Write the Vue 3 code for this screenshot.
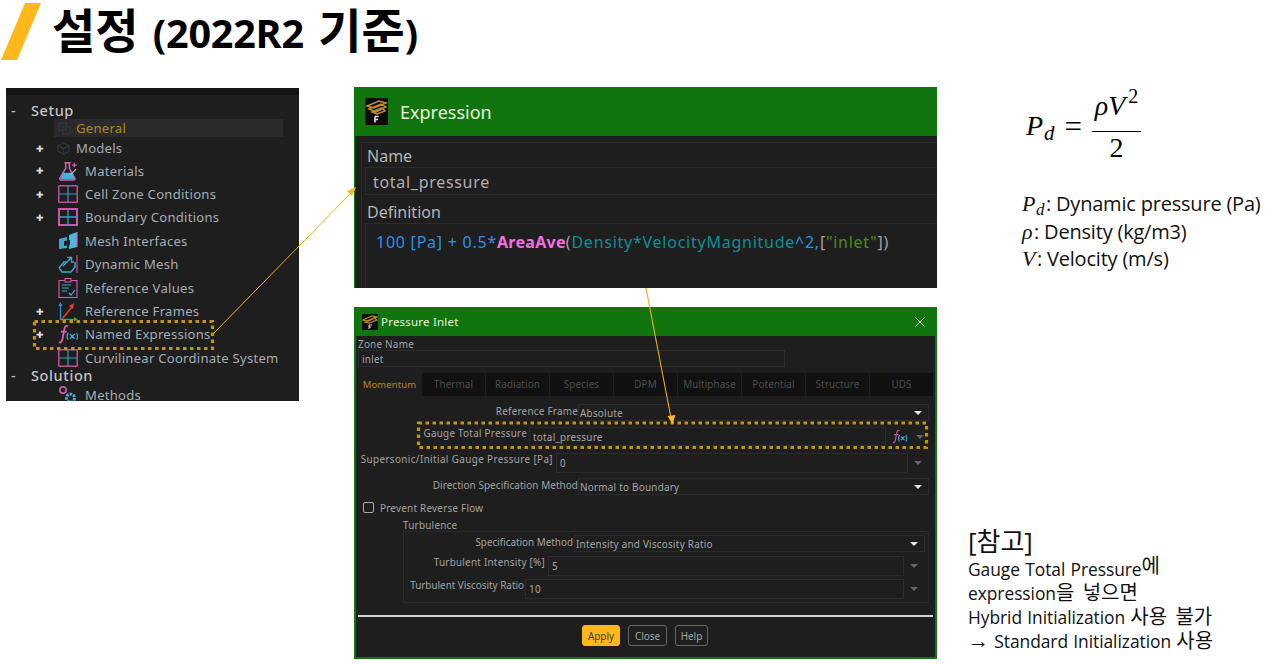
<script setup>
const tabs = ['Thermal','Radiation','Species','DPM','Multiphase','Potential','Structure','UDS']
</script>

<template>
  <div class="slide">
    <header class="title">
      <span class="slash"></span>
      <h1><span class="ko">설정</span> <span class="lat">(2022R2</span> <span class="ko">기준</span><span class="lat">)</span></h1>
    </header>

    <main class="columns">
      <section class="tree">
        <div class="tree-top"></div>
        <div class="node head h1st"><span class="mark">-</span>Setup</div>
        <div class="node general"><svg class="ic small" viewBox="0 0 14 14"><rect x="1" y="1" width="8" height="8" fill="none" stroke="#34343c" stroke-width="1.4"/><rect x="5" y="5" width="8" height="8" fill="none" stroke="#34343c" stroke-width="1.4"/></svg><span class="gold">General</span></div>
        <div class="node models"><span class="plus">✚</span><svg class="ic small" viewBox="0 0 14 14"><path d="M7 1l6 3v6l-6 3-6-3V4zM1 4l6 3 6-3M7 7v6" fill="none" stroke="#34343c" stroke-width="1.3"/></svg><span>Models</span></div>
        <div class="node"><span class="plus">✚</span><svg class="ic" viewBox="0 0 22 22"><path d="M7 2h7M8.500 2v6L2 19q0 2 2 2h13q2 0 1.500-2L12.500 8V2" fill="none" stroke="#d65fb0" stroke-width="1.7"/><path d="M5.500 13h10l3 7H3z" fill="#3fb4dc"/><path d="M18 2v5M15.500 4.500h5" stroke="#d65fb0" stroke-width="1.3"/><path d="M14 15l6-6" stroke="#c0c0c0" stroke-width="1.2"/></svg><span>Materials</span></div>
        <div class="node"><span class="plus">✚</span><svg class="ic" viewBox="0 0 20 18"><rect x=".8" y=".8" width="18.400" height="16.400" fill="none" stroke="#e05cb8" stroke-width="1.2"/><path d="M10 1v16M1 9h18" stroke="#3a9cc0" stroke-width="1.2"/></svg><span>Cell Zone Conditions</span></div>
        <div class="node"><span class="plus">✚</span><svg class="ic" viewBox="0 0 20 18"><rect x="1" y="1" width="18" height="16" fill="none" stroke="#e05cb8" stroke-width="1.800"/><path d="M10 1v16M1 9h18" stroke="#3a9cc0" stroke-width="1.3"/></svg><span>Boundary Conditions</span></div>
        <div class="node"><svg class="ic" viewBox="0 0 20 20"><path d="M1 8l8-2v11l-8 1z" fill="#3fa8d0"/><path d="M11 4l8-3v15l-8 2z" fill="#4ab8e0"/><path d="M6 10l6-1v5l-6 1z" fill="#222"/><path d="M19 1v15" stroke="#d65fb0" stroke-width="1.200"/></svg><span>Mesh Interfaces</span></div>
        <div class="node"><svg class="ic" viewBox="0 0 20 20"><path d="M19 1v18" stroke="#d65fb0" stroke-width="1"/><path d="M1 14l5-6h2M13 8h3M1 14l3 4h9l4-5V8" fill="none" stroke="#3fa8d0" stroke-width="1.400"/><path d="M5 12L13 4M9.500 3.500h4v4" fill="none" stroke="#3fa8d0" stroke-width="1.400"/></svg><span>Dynamic Mesh</span></div>
        <div class="node"><svg class="ic" viewBox="0 0 20 20"><rect x="1" y="2.500" width="18" height="17" fill="none" stroke="#d65fb0" stroke-width="1.100"/><rect x="7" y=".5" width="6" height="3.500" fill="#1e1e1e" stroke="#d65fb0"/><path d="M4 7h9M4 10h7M4 13h5" stroke="#3fa8d0" stroke-width="1.100"/><path d="M11 15l2 2 4-5" fill="none" stroke="#3fa8d0" stroke-width="1.200"/></svg><span>Reference Values</span></div>
        <div class="node"><span class="plus">✚</span><svg class="ic" viewBox="0 0 20 20"><path d="M2.500 19V3" stroke="#2f8fd8" stroke-width="1.300"/><path d="M.5 5l2-4 2 4z" fill="#2f8fd8"/><path d="M4 18L14 6" stroke="#e03c3c" stroke-width="1.600"/><path d="M11 5l5-3-1 6z" fill="#e03c3c"/><path d="M3 18.500h14" stroke="#27b04a" stroke-width="1.300"/><path d="M16 16l4 2.500-4 1.500z" fill="#27b04a"/></svg><span>Reference Frames</span></div>
        <div class="node"><span class="plus">✚</span><svg class="ic" viewBox="0 0 21 20"><path d="M10.500 2Q8 .5 7 3.500L4.500 16Q3.800 19.500 1 18.500M3 7.500H9" fill="none" stroke="#d65fb0" stroke-width="1.900"/><path d="M10.500 9q-2 4 0 7M19.500 9q2 4 0 7M12.500 10l5 5M17.500 10l-5 5" fill="none" stroke="#3fa8d0" stroke-width="1.400"/></svg><span>Named Expressions</span></div>
        <div class="node"><svg class="ic" viewBox="0 0 20 18"><rect x=".8" y=".8" width="18.400" height="16.400" fill="none" stroke="#e05cb8" stroke-width="1.200"/><path d="M10 1v16M1 9h18" stroke="#3a9cc0" stroke-width="1.200"/></svg><span>Curvilinear Coordinate System</span></div>
        <div class="node head hsol"><span class="mark">-</span>Solution</div>
        <div class="node meth"><svg class="ic" viewBox="0 0 20 20"><circle cx="5" cy="5" r="3.200" fill="none" stroke="#d65fb0" stroke-width="1.500"/><circle cx="12.500" cy="13" r="4" fill="none" stroke="#3fa8d0" stroke-width="3" stroke-dasharray="2.500 1"/></svg><span>Methods</span></div>
      </section>

      <section class="mid">
        <div class="expr">
          <div class="expr-bar">
            <svg class="fluent" viewBox="0 0 23 27"><rect width="23" height="27" fill="#0b0b0b"/><path d="M2 8L14 3l7 2-12 5zM4 11l12-5 5 3-10 5zM7 14l10-4 3 3-8 3z" fill="none" stroke="#c08a24" stroke-width="1.500"/><path d="M10 18.500h3.500M10 18.500v6M10 21.500h3" stroke="#e8e8e8" stroke-width="1.500"/></svg>
            <span>Expression</span>
          </div>
          <div class="expr-body">
            <div class="expr-label first">Name</div>
            <div class="expr-field name">total_pressure</div>
            <div class="expr-label">Definition</div>
            <div class="expr-field def"><span class="c-num">100 [Pa] + 0.5</span><span class="c-op">*</span><b class="c-fn">AreaAve</b><span class="c-par">(</span><span class="c-var">Density*VelocityMagnitude</span><span class="c-num">^2,</span><span class="c-par">[</span><span class="c-str">"inlet"</span><span class="c-par">])</span></div>
          </div>
        </div>

        <div class="inlet">
          <div class="inlet-bar">
            <svg class="fluent-s" viewBox="0 0 16 16"><rect width="16" height="16" fill="#0b0b0b"/><path d="M1 6l9-4 5 1-9 4zM3 8l9-4 3 2-8 3z" fill="none" stroke="#c08a24" stroke-width="1.200"/><path d="M7 11v4M7 11h3M7 13h2" stroke="#ddd"/></svg>
            <span class="inlet-title">Pressure Inlet</span>
            <svg class="close" viewBox="0 0 10 10"><path d="M.5.5l9 9M9.500.5l-9 9" stroke="#f0f0f0" stroke-width="1"/></svg>
          </div>
          <div class="inlet-body">
            <div class="zone-label">Zone Name</div>
            <div class="box zone">inlet</div>
            <div class="tabs">
              <div class="tab active">Momentum</div>
              <div v-for="t in tabs" :key="t" class="tab">{{ t }}</div>
            </div>

            <div class="row r1">
              <label class="lab w-222">Reference Frame</label>
              <div class="box sel w-351"><span>Absolute</span><i class="tri"></i></div>
            </div>
            <div class="row r2">
              <label class="lab w-171 up">Gauge Total Pressure</label>
              <div class="box inp w-357 gap2">total_pressure</div>
              <svg class="fx" viewBox="0 0 21 20"><path d="M10.500 2Q8 .5 7 3.500L4.500 16Q3.800 19.500 1 18.500M3 7.500H9" fill="none" stroke="#c050a0" stroke-width="1.700"/><path d="M10.500 8q-2.500 4.500 0 9M19.500 8q2.500 4.500 0 9M12.500 10l5 5M17.500 10l-5 5" fill="none" stroke="#3fa8d0" stroke-width="1.700"/></svg>
              <i class="tri dim after-fx"></i>
            </div>
            <div class="row r3">
              <label class="lab w-197 up wide">Supersonic/Initial Gauge Pressure [Pa]</label>
              <div class="box inp w-352 gap3">0</div>
              <i class="tri dim after"></i>
            </div>
            <div class="row r4">
              <label class="lab w-222 mid-sp">Direction Specification Method</label>
              <div class="box sel w-351"><span>Normal to Boundary</span><i class="tri"></i></div>
            </div>
            <div class="check"><span class="cb"></span><span>Prevent Reverse Flow</span></div>
            <div class="turb-label">Turbulence</div>
            <div class="group">
              <div class="row g1">
                <label class="lab w-169 tight">Specification Method</label>
                <div class="box sel w-351 gap1"><span>Intensity and Viscosity Ratio</span><i class="tri"></i></div>
              </div>
              <div class="row g2">
                <label class="lab w-141 up">Turbulent Intensity [%]</label>
                <div class="box inp w-356 gap3">5</div>
                <i class="tri dim after"></i>
              </div>
              <div class="row g3">
                <label class="lab w-120 up tight">Turbulent Viscosity Ratio</label>
                <div class="box inp w-379 gap1">10</div>
                <i class="tri dim after"></i>
              </div>
            </div>
            <div class="sep"></div>
            <div class="btns">
              <button class="btn apply">Apply</button>
              <button class="btn close-b">Close</button>
              <button class="btn help">Help</button>
            </div>
          </div>
        </div>
      </section>

      <section class="right">
        <div class="formula">
          <span class="m pd">P<sub>d</sub></span>
          <span class="eq">=</span>
          <span class="frac">
            <span class="num m">ρV<sup>2</sup></span>
            <span class="den">2</span>
          </span>
        </div>
        <div class="legend">
          <div><span class="mi">P<sub>d</sub></span>: Dynamic pressure (Pa)</div>
          <div><span class="mi">ρ</span>: Density (kg/m3)</div>
          <div><span class="mi">V</span>: Velocity (m/s)</div>
        </div>
        <div class="note">
          <div class="note-h">[참고]</div>
          <div class="note-l">Gauge Total Pressure<span class="kr raise">에</span></div>
          <div class="note-l">expression<span class="kr">을 넣으면</span></div>
          <div class="note-l">Hybrid Initialization <span class="kr">사용 불가</span></div>
          <div class="note-l"><span class="arrow">→</span> Standard Initialization <span class="kr">사용</span></div>
        </div>
      </section>
    </main>

    <svg class="overlay" viewBox="0 0 1278 664">
      <rect x="34.500" y="321.500" width="178" height="27" fill="none" stroke="#c8920f" stroke-width="3.200" stroke-dasharray="3.500 3.500"/>
      <rect x="418.500" y="423" width="508" height="24.500" fill="none" stroke="#c8920f" stroke-width="3.200" stroke-dasharray="3.500 3.500"/>
      <path d="M213 334L351 193" stroke="#f0ae1e" stroke-width="1"/>
      <path d="M356 187l-9 4 5 5z" fill="#ffb81c"/>
      <path d="M646 288L671 418" stroke="#f0ae1e" stroke-width="1.100"/>
      <path d="M672.500 424l-5-8 8-1z" fill="#ffb81c"/>
    </svg>
  </div>
</template>

<style>
html, body { margin: 0; padding: 0; background: #fff; }
</style>

<style scoped>
.slide { position: relative; width: 1278px; height: 664px; overflow: hidden; background: #fff; font-family: "Open Sans", "Noto Sans CJK KR", sans-serif; color: #000; }
.title { height: 87px; display: flex; align-items: flex-start; position: relative; }
.slash { width: 40px; height: 57px; margin-top: 3px; background: #ffb81c; clip-path: polygon(24px 0, 40px 0, 16px 100%, 0 100%); flex: none; margin-left: 1px; }
h1 { margin: 0 0 0 11px; font-size: 36px; line-height: 56px; font-weight: 700; white-space: nowrap; word-spacing: 5px; }
.ko { font-family: "Noto Sans CJK KR", sans-serif; font-size: 47px; }
.lat { font-family: "Open Sans", sans-serif; font-size: 39.500px; letter-spacing: -.2px; }

.columns { display: flex; align-items: flex-start; }

/* Tree */
.tree { width: 293px; height: 313px; margin: 1px 0 0 6px; background: #1e1e1e; color: #a4acb4; font-family: "Noto Sans", sans-serif; font-size: 13.100px; flex: none; overflow: hidden; }
.tree-top { height: 7px; background: #141414; }
.node { position: relative; height: 23.400px; display: flex; align-items: center; padding-left: 52px; white-space: nowrap; letter-spacing: .25px; }
.node .ic { width: 20px; height: 20px; flex: none; margin-right: 7px; }
.head { padding-left: 25px; color: #c4c4c4; font-size: 14.500px; font-weight: 500; letter-spacing: .6px; height: 18px; }
.mark { position: absolute; left: 5px; color: #bbb; }
.h1st { height: 18px; margin-top: 6px; }
.hsol { height: 19px; margin-top: -4px; }
.general { height: 18px; margin-left: 48px; padding-left: 4px; margin-right: 16px; background: #2a2a2a; }
.node.general .ic.small, .node.models .ic.small { width: 13px; height: 13px; margin-right: 6px; }
.node.general .ic.small { margin-right: 5px; }
.node.models .ic.small { margin-left: -1px; }
.models { height: 20px; margin-top: 1px; margin-bottom: 1px; }
.gold { color: #b2881c; }
.plus { position: absolute; left: 30px; font-size: 8.500px; color: #ddd; }
.meth { height: 20px; margin-top: 0; }

/* Middle */
.mid { width: 583px; margin-left: 55px; flex: none; display: flex; flex-direction: column; gap: 19px; }
.expr { height: 201px; background: #1e1e1e; border-left: 1px solid #11750f; overflow: hidden; box-sizing: border-box; }
.expr-bar { height: 49px; background: #11750f; display: flex; align-items: center; padding-left: 10px; color: #e6f5dc; font-family: "Noto Sans", sans-serif; font-size: 18px; gap: 12px; }
.fluent { width: 23px; height: 27px; flex: none; }
.expr-body { margin: 6px 0 0 6px; border-top: 1px solid #2c2c2c; border-left: 1px solid #2c2c2c; padding: 0 0 0 3px; font-family: "Noto Sans", sans-serif; height: 200px; }
.expr-label { color: #b4b4b4; font-size: 16px; line-height: 22px; padding-left: 2px; margin-top: 6px; }
.expr-label.first { margin-top: 2px; }
.expr-field { border: 1px solid #2c2c2c; border-right: 0; box-sizing: border-box; padding-left: 7px; color: #b0b0b0; font-size: 16px; white-space: nowrap; }
.name { height: 28px; line-height: 28px; letter-spacing: .7px; }
.def { height: 80px; line-height: 36px; padding-left: 10px; letter-spacing: .75px; }
.c-num { color: #2f8fe8; } .c-op { color: #2f8fe8; }
.c-fn { color: #f070e0; letter-spacing: .3px; } .c-par { color: #a0a0a0; }
.c-var { color: #0f8f96; } .c-str { color: #4c8c18; }

.inlet { height: 352px; box-sizing: border-box; background: #1e1e1e; border: 0 solid #11750f; border-width: 0 2px 2px 2px; }
.inlet-bar { height: 29px; margin-right: -2px; margin-left: -2px; background: #11750f; display: flex; align-items: center; padding: 0 12px 0 8px; color: #e6f5dc; font-family: "Noto Sans", sans-serif; font-size: 11.500px; letter-spacing: .2px; }
.fluent-s { width: 16px; height: 16px; flex: none; margin-right: 3px; }
.inlet-title { flex: 1; }
.close { width: 10px; height: 10px; }
.inlet-body { font-family: "Noto Sans", sans-serif; color: #a4a4a4; font-size: 9.900px; letter-spacing: .25px; }
.zone-label { margin: 2px 0 0 2px; line-height: 12px; }
.box { box-sizing: border-box; border: 1px solid #2c2c2c; color: #a8a8a8; flex: none; white-space: nowrap; }
.zone { width: 427px; height: 17px; margin-left: 2px; line-height: 16px; padding-left: 3px; }
.tabs { display: flex; gap: 1px; margin: 6px 0 0 2px; }
.tab { width: 63px; height: 23px; line-height: 23px; text-align: center; background: #111; color: #4c4c4c; letter-spacing: .1px; }
.tab.active { background: none; color: #b2881c; font-size: 9.500px; }

.row { display: flex; align-items: flex-start; }
.lab { flex: none; text-align: right; line-height: 14px; white-space: nowrap; color: #a4a4a4; }
.up { margin-top: -1px; }
.tight { letter-spacing: 0; }
.wide { letter-spacing: .38px; }
.mid-sp { letter-spacing: .1px; }
.w-222 { width: 222px; } .w-171 { width: 171px; } .w-197 { width: 197px; } .w-169 { width: 169px; } .w-141 { width: 141px; } .w-120 { width: 120px; }
.w-351 { width: 351px; } .w-357 { width: 357px; } .w-352 { width: 352px; } .w-356 { width: 356px; } .w-379 { width: 379px; }
.gap1 { margin-left: 1px; } .gap2 { margin-left: 2px; } .gap3 { margin-left: 3px; }
.r1 { margin-top: 8px; } .r2 { margin-top: 6px; } .r3 { margin-top: 7px; } .r4 { margin-top: 5px; }
.sel { height: 17px; display: flex; align-items: center; justify-content: space-between; padding: 1px 6px 0 1px; }
.r2 .inp { height: 19px; line-height: 19px; padding-left: 3px; }
.inp { height: 20px; line-height: 19px; padding-left: 3px; }
.tri { width: 0; height: 0; border: 4px solid transparent; border-top: 4px solid #e8e8e8; border-bottom: 0; flex: none; }
.tri.dim { border-top-color: #666; }
.after { margin: 8px 0 0 6px; }
.after-fx { margin: 8px 0 0 9px; }
.fx { width: 15px; height: 15px; margin: 2px 0 0 6px; flex: none; }
.check { display: flex; align-items: center; gap: 6px; margin: 7px 0 0 7px; height: 11px; }
.cb { width: 9px; height: 9px; border: 1px solid #a8a8a8; border-radius: 2px; flex: none; }
.turb-label { margin: 6px 0 0 47px; line-height: 12px; }
.group { box-sizing: border-box; width: 526px; height: 72px; margin-left: 47px; border: 1px solid #2a2a2a; padding-top: 3px; }
.g2 { margin-top: 4px; } .g3 { margin-top: 3px; }
.sep { height: 2px; background: #cfcfcf; margin: 12px 2px 0 2px; }
.btns { display: flex; gap: 8px; margin: 8px 0 0 226px; }
.btn { box-sizing: border-box; height: 21px; padding: 0; border-radius: 3px; border: 1px solid #666; background: #1e1e1e; color: #a8a8a8; font: inherit; }
.apply { width: 38px; background: #ffb81c; border-color: #ffb81c; color: #3a3a2a; }
.close-b { width: 39px; } .help { width: 33px; }

/* Right */
.right { margin-left: 0; flex: 1; min-width: 0; }
.formula { display: flex; align-items: center; margin: -3px 0 0 89px; font-family: "Liberation Serif", serif; font-size: 28px; height: 84px; }
.m { font-style: italic; }
.pd { letter-spacing: 1px; }
.m sub { font-size: 21px; line-height: 0; vertical-align: -5px; }
.m sup { font-style: normal; font-size: 20px; line-height: 0; vertical-align: 12px; margin-left: 3px; }
.eq { margin: 0 10px 0 9px; font-size: 31px; line-height: 1; }
.frac { display: inline-flex; flex-direction: column; align-items: center; width: 49px; }
.num { border-bottom: 1.500px solid #000; width: 100%; text-align: center; line-height: 36px; padding-bottom: 7px; white-space: nowrap; }
.den { line-height: 32px; }
.legend { margin: 22px 0 0 85px; font-size: 20px; line-height: 27.500px; color: #111; letter-spacing: -.2px; white-space: nowrap; }
.mi { font-family: "Liberation Serif", serif; font-style: italic; font-size: 22px; margin-right: 1px; letter-spacing: .5px; }
.mi sub { font-size: 17px; line-height: 0; vertical-align: -4px; }
.note { margin: 253px 0 0 31px; white-space: nowrap; color: #111; }
.note-h { font-size: 26px; line-height: 31px; font-family: "Open Sans", "Noto Sans CJK KR", sans-serif; }
.note-l { font-size: 17.400px; line-height: 24px; letter-spacing: -.05px; word-spacing: .8px; }
.kr { font-family: "Noto Sans CJK KR", sans-serif; font-size: 20px; line-height: 0; word-spacing: 4px; }
.raise { position: relative; top: -3px; }
.arrow { font-family: "Liberation Sans", sans-serif; font-size: 21px; line-height: 0; font-weight: 700; letter-spacing: 0; }

.overlay { position: absolute; inset: 0; width: 1278px; height: 664px; pointer-events: none; }
</style>
